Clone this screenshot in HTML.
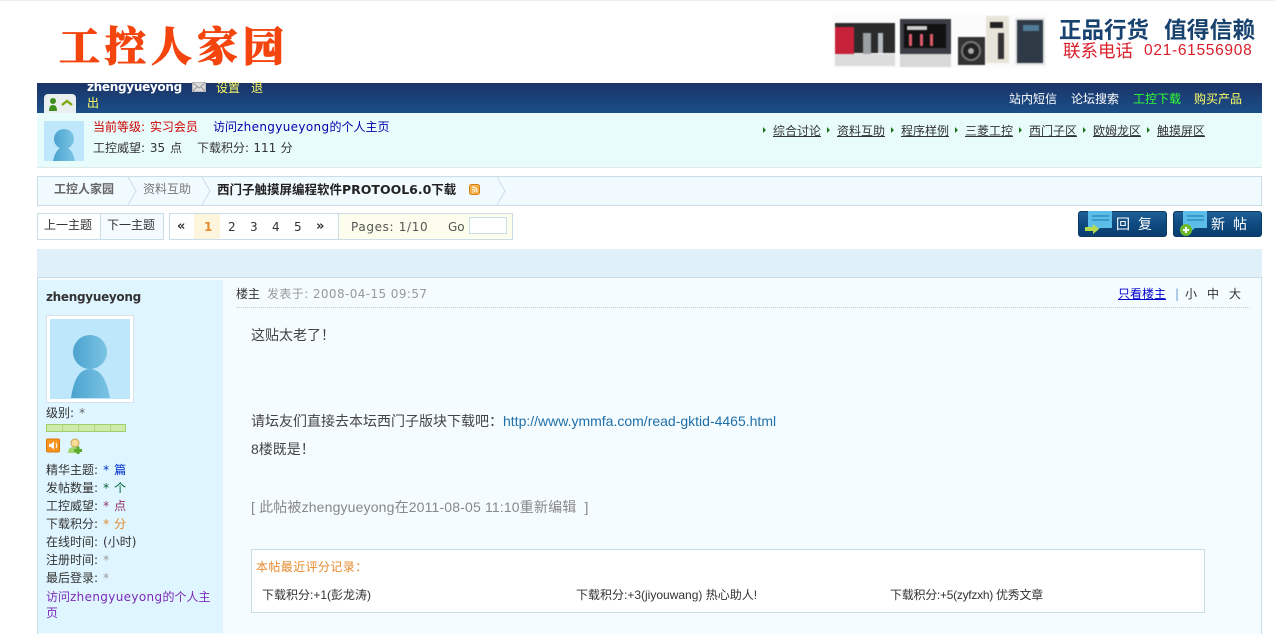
<!DOCTYPE html>
<html lang="zh"><head><meta charset="utf-8"><title>西门子触摸屏编程软件PROTOOL6.0下载</title>
<style>
html,body{margin:0;padding:0;background:#fff}
body{position:relative;width:1275px;height:633px;overflow:hidden;font:12px "DejaVu Sans","WenQuanYi Zen Hei","Noto Sans CJK SC",sans-serif;color:#333}
.a{position:absolute;white-space:nowrap;line-height:16px}
.b{position:absolute}
.l{font-family:"Liberation Sans","WenQuanYi Zen Hei","Noto Sans CJK SC",sans-serif}
.s{word-spacing:1.2px}
u{text-decoration:underline}
</style></head><body>
<div class="b" style="left:0;top:0;width:1275px;height:1px;background:#eee"></div>
<div class="a" style="left:59px;top:20px;font:900 41px/48px 'Noto Serif CJK SC',serif;color:#f4450f;letter-spacing:5px;-webkit-text-stroke:.8px #f4450f">工控人家园</div>

<svg class="b" style="left:833px;top:15px;filter:blur(.5px)" width="214" height="53" viewBox="0 0 214 53">
<rect width="214" height="53" fill="#fbfbfb"/>
<rect x="2" y="8" width="60" height="30" fill="#2b2b2b"/><rect x="2" y="12" width="19" height="27" fill="#c8213a"/><rect x="30" y="18" width="8" height="21" fill="#9aa0a4"/><rect x="45" y="18" width="5" height="20" fill="#b5bbc0"/><rect x="2" y="39" width="60" height="12" fill="#dcdcdc"/>
<rect x="67" y="4" width="51" height="35" fill="#3a3d43"/><rect x="71" y="9" width="42" height="24" fill="#111"/><rect x="76" y="19" width="3" height="12" fill="#e05a6a"/><rect x="87" y="19" width="3" height="12" fill="#e05a6a"/><rect x="97" y="19" width="3" height="12" fill="#e05a6a"/><rect x="74" y="11" width="20" height="4" fill="#ccc"/><rect x="67" y="39" width="51" height="13" fill="#d8d8d8"/>
<rect x="125" y="22" width="27" height="28" fill="#333"/><circle cx="138" cy="36" r="9" fill="#222" stroke="#777" stroke-width="2"/><circle cx="138" cy="36" r="3" fill="#aaa"/>
<rect x="153" y="1" width="23" height="47" fill="#e7e4d9"/><rect x="157" y="7" width="13" height="6" fill="#222"/><rect x="165" y="18" width="6" height="26" fill="#333"/>
<rect x="182" y="3" width="30" height="47" fill="#e4e4e4"/><rect x="184" y="5" width="26" height="43" fill="#2f3a46"/><rect x="190" y="10" width="16" height="6" fill="#4f7c99"/>
</svg>
<div class="a" style="left:1059px;top:15px;font:700 22.500px/28px 'Noto Sans CJK SC',sans-serif;color:#18436f">正品行货</div>
<div class="a" style="left:1164px;top:15px;font:700 22.800px/28px 'Noto Sans CJK SC',sans-serif;color:#18436f">值得信赖</div>
<div class="a" style="left:1063px;top:41px;font:17.500px/20px 'Noto Sans CJK SC',sans-serif;color:#d91e2a">联系电话</div>
<div class="a" style="left:1144px;top:41px;font:15.500px/20px 'Liberation Sans',sans-serif;color:#d91e2a;letter-spacing:.7px">021-61556908</div>

<div class="b" style="left:37px;top:83px;width:1225px;height:30px;background:linear-gradient(#1b3367,#1a4f89);overflow:hidden"></div>
<div class="b" style="left:44px;top:94px;width:32px;height:19px;background:#e9eeee;border-radius:4px 4px 0 0"></div>
<svg class="b" style="left:44px;top:94px" width="32" height="19"><circle cx="9" cy="7" r="3" fill="#3f8f1f"/><path d="M5 17q0-6 4-6t4 6z" fill="#3f8f1f"/><path d="M18 11l5-4 5 4" fill="none" stroke="#7da808" stroke-width="2.400"/></svg>
<div class="a" style="left:87px;top:79px;font-weight:700;font-size:12px;letter-spacing:-.3px;color:#fff">zhengyueyong</div>
<svg class="b" style="left:192px;top:82px" width="14" height="10"><rect x=".5" y=".5" width="13" height="9" fill="#ddd" stroke="#bbb"/><path d="M1 1l6 5 6-5M1 9l4-4M13 9l-4-4" stroke="#999" fill="none"/></svg>
<div class="a" style="left:216px;top:80px;color:#ff6">设置</div>
<div class="a" style="left:251px;top:80px;color:#ff6">退</div>
<div class="a" style="left:87px;top:95px;color:#ff6">出</div>
<div class="a" style="left:1009px;top:91px;color:#fff">站内短信</div>
<div class="a" style="left:1071px;top:91px;color:#fff">论坛搜索</div>
<div class="a" style="left:1133px;top:91px;color:#3f3">工控下载</div>
<div class="a" style="left:1194px;top:91px;color:#ff6">购买产品</div>

<div class="b" style="left:37px;top:113px;width:1225px;height:54px;background:#e9fcfc;border-bottom:1px solid #e0e9e9"></div>
<svg class="b" style="left:44px;top:121px" width="40" height="40"><defs><linearGradient id="g" x1="0" x2="1"><stop offset="0" stop-color="#4ba3cf"/><stop offset="1" stop-color="#7cc4e4"/></linearGradient></defs><rect width="40" height="40" fill="#bfe7fb"/><circle cx="20" cy="18" r="10" fill="url(#g)"/><path d="M9 40q3-14 11-14t11 14z" fill="url(#g)"/></svg>
<div class="a" style="left:93px;top:119px;color:#c00;word-spacing:1px">当前等级: 实习会员</div>
<div class="a" style="left:213px;top:119px;color:#00a">访问<span style="letter-spacing:.35px">zhengyueyong</span>的个人主页</div>
<div class="a" style="left:93px;top:140px;word-spacing:1px">工控威望: 35 点</div>
<div class="a" style="left:197px;top:140px;word-spacing:.5px">下载积分: 111 分</div>

<svg class="b" style="left:761px;top:126px" width="420" height="8" fill="#1b7a1b"><path d="M2 1l3 3-3 3zM66 1l3 3-3 3zM130 1l3 3-3 3zM194 1l3 3-3 3zM258 1l3 3-3 3zM322 1l3 3-3 3zM386 1l3 3-3 3z"/></svg>
<div class="a" style="left:773px;top:123px"><u>综合讨论</u></div>
<div class="a" style="left:837px;top:123px"><u>资料互助</u></div>
<div class="a" style="left:901px;top:123px"><u>程序样例</u></div>
<div class="a" style="left:965px;top:123px"><u>三菱工控</u></div>
<div class="a" style="left:1029px;top:123px"><u>西门子区</u></div>
<div class="a" style="left:1093px;top:123px"><u>欧姆龙区</u></div>
<div class="a" style="left:1157px;top:123px"><u>触摸屏区</u></div>

<div class="b" style="left:37px;top:176px;width:1223px;height:28px;background:#f1faff;border:1px solid #c9dde8"></div>
<svg class="b" style="left:37px;top:177px" width="480" height="28" fill="none" stroke="#c9dde8"><path d="M91 0l8 14-8 14M165 0l8 14-8 14M460 0l8 14-8 14"/></svg>
<div class="a" style="left:54px;top:181px;font-weight:700;color:#666">工控人家园</div>
<div class="a" style="left:143px;top:181px;color:#777">资料互助</div>
<div class="a" style="left:217px;top:182px;font-weight:700;font-size:12.500px;color:#222">西门子触摸屏编程软件PROTOOL6.0下载</div>
<svg class="b" style="left:469px;top:184px" width="11" height="11"><rect x=".5" y=".5" width="10" height="10" rx="2" fill="#f6b24a" stroke="#d77f15"/><path d="M3 8h1M3 5.500q3 0 3 2.500M3 3q5 0 5 5" stroke="#fff" fill="none"/></svg>

<div class="b" style="left:37px;top:213px;width:125px;height:25px;background:#fff;border:1px solid #c9dde8"></div>
<div class="b" style="left:100px;top:214px;width:62px;height:25px;background:#f4fbff;border-left:1px solid #c9dde8"></div>
<div class="a" style="left:44px;top:217px">上一主题</div>
<div class="a" style="left:107px;top:217px">下一主题</div>
<div class="b" style="left:169px;top:213px;width:342px;height:25px;background:#fff;border:1px solid #c9dde8"></div>
<div class="b" style="left:194px;top:214px;width:26px;height:25px;background:#fdf6dc"></div>
<div class="b" style="left:338px;top:214px;width:173px;height:25px;background:#fdfdee;border-left:1px solid #c9dde8"></div>
<div class="a" style="left:177px;top:219px;font-weight:700;font-size:13px">«</div>
<div class="a" style="left:204px;top:219px;font-weight:700;color:#e58a2e">1</div>
<div class="a" style="left:228px;top:219px">2</div>
<div class="a" style="left:250px;top:219px">3</div>
<div class="a" style="left:272px;top:219px">4</div>
<div class="a" style="left:294px;top:219px">5</div>
<div class="a" style="left:316px;top:219px;font-weight:700;font-size:13px">»</div>
<div class="a" style="left:351px;top:219px;color:#555;letter-spacing:.65px">Pages: 1/10</div>
<div class="a" style="left:448px;top:219px;color:#555">Go</div>
<div class="b" style="left:469px;top:217px;width:36px;height:15px;background:#fff;border:1px solid #c9dde8"></div>

<div class="b" style="left:1078px;top:211px;width:87px;height:24px;border:1px solid #0a3a66;border-radius:3px;background:linear-gradient(#1f6096,#0e4a80 50%,#0a3d6e)"></div>
<div class="b" style="left:1173px;top:211px;width:87px;height:24px;border:1px solid #0a3a66;border-radius:3px;background:linear-gradient(#1f6096,#0e4a80 50%,#0a3d6e)"></div>
<svg class="b" style="left:1084px;top:211px" width="30" height="26"><path d="M4 0h24v17H16l-7 6v-6H4z" fill="#5cbde8"/><path d="M8 5h17M8 9h17" stroke="#2f8fc0" stroke-width="1.400"/><path d="M1 16h8v-3l6 5-6 5v-3H1z" fill="#b6db4a"/></svg>
<svg class="b" style="left:1179px;top:211px" width="30" height="26"><path d="M4 0h24v17H16l-7 6v-6H4z" fill="#5cbde8"/><path d="M8 5h17M8 9h17" stroke="#2f8fc0" stroke-width="1.400"/><circle cx="7" cy="19" r="6" fill="#6cba2c"/><path d="M4 19h6M7 16v6" stroke="#fff" stroke-width="2"/></svg>
<div class="a" style="left:1116px;top:217px;font-size:14px;color:#fff;letter-spacing:8px">回复</div>
<div class="a" style="left:1211px;top:217px;font-size:14px;color:#fff;letter-spacing:8px">新帖</div>

<div class="b" style="left:37px;top:249px;width:1225px;height:28px;background:#dff0f9"></div>
<div class="b" style="left:37px;top:277px;width:1223px;height:356px;background:#f5fcff;border-left:1px solid #c9dde8;border-right:1px solid #c9dde8;border-top:1px solid #c9dde8"></div>
<div class="b" style="left:38px;top:280px;width:185px;height:353px;background:#dff5ff"></div>

<div class="a" style="left:46px;top:289px;font-weight:700;font-size:12px;letter-spacing:-.3px;color:#333">zhengyueyong</div>
<div class="b" style="left:46px;top:315px;width:80px;height:80px;padding:3px;background:#fff;border:1px solid #d6e4ea"></div>
<svg class="b" style="left:50px;top:319px" width="80" height="80"><rect width="80" height="80" fill="#bfe7fb"/><circle cx="40" cy="33" r="17" fill="url(#g)"/><path d="M21 79q4-29 19-29t20 29z" fill="url(#g)"/></svg>
<div class="a s" style="left:46px;top:405px">级别: <span style="color:#666">*</span></div>
<div class="b" style="left:46px;top:424px;width:78px;height:6px;background:repeating-linear-gradient(90deg,#cfeaa9 0 15px,#a9d67e 15px 16px);border:1px solid #9fd06c"></div>
<svg class="b" style="left:46px;top:438px" width="40" height="16"><rect x=".5" y="1" width="13" height="13" rx="1.500" fill="#f7941e" stroke="#d9770f"/><path d="M3 6h2l3-2.500v8L5 9H3z" fill="#fff"/><path d="M10 5q1.500 2.500 0 5" stroke="#fff" fill="none"/><circle cx="29" cy="5" r="4" fill="#f8dc96" stroke="#caa24d"/><path d="M22 15q0-6 6-6t6 6z" fill="#9fd66e"/><path d="M28 11h8v3h-8zM30.500 8.500h3v8h-3z" fill="#5aab2e"/></svg>
<div class="a s" style="left:46px;top:462px">精华主题: <span style="color:#03c">* 篇</span></div>
<div class="a s" style="left:46px;top:480px">发帖数量: <span style="color:#063">* 个</span></div>
<div class="a s" style="left:46px;top:498px">工控威望: <span style="color:#936">* 点</span></div>
<div class="a s" style="left:46px;top:516px">下载积分: <span style="color:#e58a2e">* 分</span></div>
<div class="a s" style="left:46px;top:534px">在线时间: (小时)</div>
<div class="a s" style="left:46px;top:552px">注册时间: <span style="color:#999">*</span></div>
<div class="a s" style="left:46px;top:570px">最后登录: <span style="color:#999">*</span></div>
<div class="a" style="left:46px;top:589px;color:#7a2bb8">访问<span style="letter-spacing:.35px">zhengyueyong</span>的个人主</div>
<div class="a" style="left:46px;top:605px;color:#7a2bb8">页</div>

<div class="a" style="left:236px;top:286px">楼主</div>
<div class="a" style="left:267px;top:286px;color:#999;letter-spacing:.4px">发表于: 2008-04-15 09:57</div>
<div class="a" style="left:1118px;top:286px;color:#00c"><u>只看楼主</u></div>
<div class="a" style="left:1175px;top:286px"><span style="color:#69c">|</span></div>
<div class="a" style="left:1185px;top:286px">小</div>
<div class="a" style="left:1207px;top:286px">中</div>
<div class="a" style="left:1229px;top:286px">大</div>
<div class="b" style="left:236px;top:307px;width:1014px;border-top:1px dotted #c3ccd0"></div>

<div class="a l" style="left:251px;top:327px;font-size:14px;color:#444">这贴太老了！</div>
<div class="a l" style="left:251px;top:413px;font-size:14px;color:#444">请坛友们直接去本坛西门子版块下载吧：<span style="color:#1f6fa8">http://www.ymmfa.com/read-gktid-4465.html</span></div>
<div class="a l" style="left:251px;top:441px;font-size:14px;color:#444">8楼既是！</div>
<div class="a l" style="left:251px;top:499px;font-size:14px;color:#888;letter-spacing:.16px">[ 此帖被zhengyueyong在2011-08-05 11:10重新编辑&nbsp; ]</div>

<div class="b" style="left:251px;top:549px;width:952px;height:62px;background:#fff;border:1px solid #c9dde8"></div>
<div class="a l" style="left:256px;top:559px;color:#e58a2e;letter-spacing:.4px">本帖最近评分记录：</div>
<div class="a l" style="left:262px;top:587px">下载积分:+1(彭龙涛)</div>
<div class="a l" style="left:576px;top:587px">下载积分:+3(jiyouwang) 热心助人!</div>
<div class="a l" style="left:890px;top:587px;letter-spacing:-.27px">下载积分:+5(zyfzxh) 优秀文章</div>
</body></html>
